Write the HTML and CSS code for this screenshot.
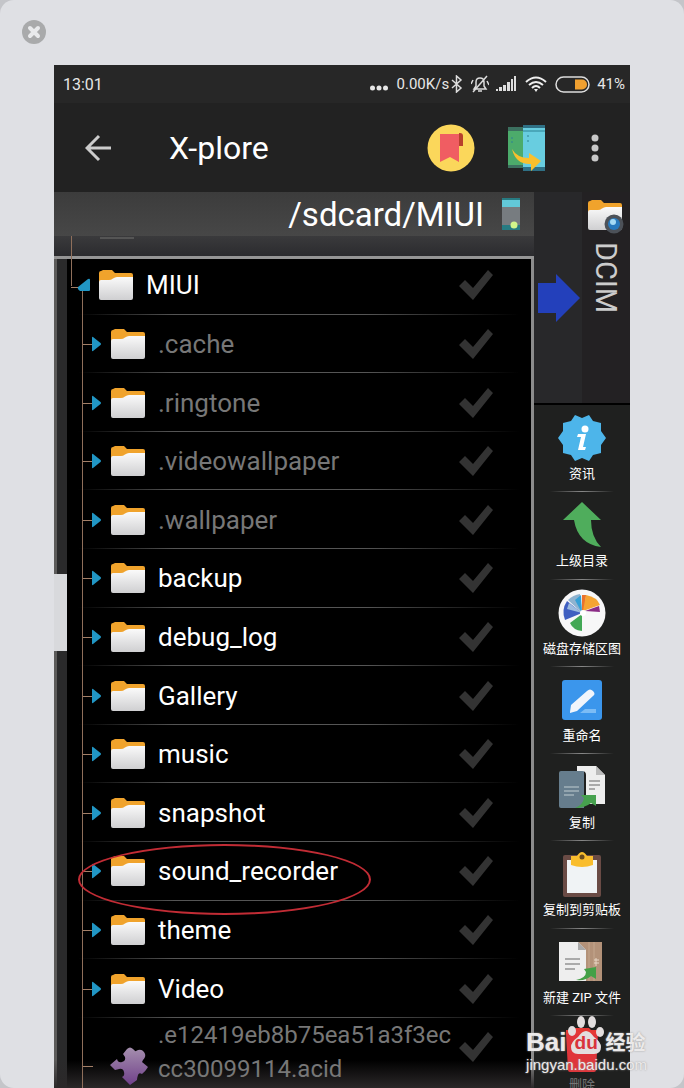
FILE: index.html
```html
<!DOCTYPE html>
<html lang="zh-CN">
<head>
<meta charset="UTF-8" />
<meta name="viewport" content="width=device-width, initial-scale=1" />
<title>X-plore</title>
<link rel="stylesheet" href="styles.css">
</head>
<body>
<svg class="defs" aria-hidden="true">
  <defs>
    <linearGradient id="paper" x1="0" y1="0" x2="0" y2="1">
      <stop offset="0" stop-color="#fafafa" />
      <stop offset="1" stop-color="#cfcfd1" />
    </linearGradient>
    <linearGradient id="plum" x1="0" y1="0" x2="0" y2="1">
      <stop offset="0" stop-color="#a58fae" />
      <stop offset="1" stop-color="#70408a" />
    </linearGradient>
    <symbol id="folder" viewBox="0 0 36 30">
      <path d="M1 12V3q0-2 2-2l2-1h9l3 3h16q2 0 2 2v7z" fill="#f0a32c" />
      <path d="M1 12q0-2 2-2h8q2 0 4-1.500t4-1.500h16v21q0 2-2 2H3q-2 0-2-2z" fill="url(#paper)" />
    </symbol>
    <symbol id="check" viewBox="0 0 36 32">
      <path d="M1 17l6-6 8 8L30 1l5 5-20 25z" fill="#333" />
    </symbol>
    <symbol id="branch" viewBox="0 0 18 16">
      <path d="M0 8.500h9" stroke="#a58068" />
      <path d="M9 1.500q0-1 1-.5l7.500 6q1 1 0 2l-7.500 6q-1 .5-1-.5z" fill="#2196c4" />
    </symbol>
  </defs>
</svg>

<div class="window">
  <button class="close" aria-label="关闭">
    <svg width="24" height="24" viewBox="0 0 24 24"><circle cx="12" cy="12" r="12" fill="#a9aaab" /><path d="M8 8l8 8M16 8l-8 8" stroke="#e9eaec" stroke-width="4" stroke-linecap="round" /></svg>
  </button>

  <main class="phone">
    <header>
      <div class="status">
        <span class="time">13:01</span>
        <svg class="dots" width="18" height="20" viewBox="0 0 18 20" fill="#e6e6e6"><circle cx="2.500" cy="14" r="2.500" /><circle cx="9" cy="14" r="2.500" /><circle cx="15.500" cy="14" r="2.500" /></svg>
        <span class="speed">0.00K/s</span>
        <svg width="12" height="18" viewBox="0 0 12 18" fill="none" stroke="#ddd" stroke-width="1.500"><path d="M1 5l9 8-4.500 4V1L10 5l-9 8" /></svg>
        <svg class="bell" width="18" height="18" viewBox="0 0 18 18" fill="none" stroke="#ddd" stroke-width="1.500"><path d="M3 14h12l-2-3V7q0-4-4-4T5 7v4zM7 16h4M16 1L2 17M2 5L0 9M16 6l2 4" /></svg>
        <svg class="signal" width="22" height="16" viewBox="0 0 22 16" fill="#ddd"><path d="M1 13h2v2H1zM4 11h3v4H4zM8 9h3v6H8zM12 6h3v9h-3zM16 3h2v12h-2zM19 0h2v15h-2z" /></svg>
        <svg class="wifi" width="22" height="16" viewBox="0 0 22 16" fill="none" stroke="#eee" stroke-width="2"><path d="M1 6q10-9 20 0M4 9q7-6 14 0M7 12q4-4 8 0" /><path d="M9 13h4l-2 3z" fill="#eee" stroke="none" /></svg>
        <svg class="battery" width="36" height="17" viewBox="0 0 36 17"><rect x="1" y="1" width="33" height="15" rx="7.500" fill="none" stroke="#ddd" stroke-width="1.500" /><path d="M20 3.500h7a5 5 0 010 10h-7z" fill="#f0a030" /></svg>
        <span class="charge">41%</span>
      </div>

      <div class="toolbar">
        <button class="back" aria-label="返回">
          <svg width="28" height="28" viewBox="0 0 28 28" fill="none" stroke="#ccc" stroke-width="3"><path d="M26 14H3M14 2L2 14l12 12" /></svg>
        </button>
        <h1>X-plore</h1>
        <button aria-label="书签">
          <svg width="48" height="48" viewBox="0 0 48 48"><circle cx="24" cy="24" r="23.500" fill="#fbd75b" /><path d="M13 10h19v28l-9-5-10 5z" fill="#f05d62" /><path d="M32 9h1q3 0 3 3v10h-4z" fill="#b8402c" /></svg>
        </button>
        <button class="swap" aria-label="切换窗格">
          <svg width="40" height="48" viewBox="0 0 40 48"><path d="M1 5h16v39H1z" fill="#4cab6b" /><path d="M1 3h16v4H1zM1 41h16v3H1z" fill="#3c705f" /><path d="M16 3h22v43H16z" fill="#68cde0" /><path d="M16 1h22v3H16zM16 43h22v4H16z" fill="#2f7085" /><path d="M16 7h22M4 14h2M4 18h2M20 12h2M20 17h2" stroke="#2c8294" /><path d="M5 25q5 9 17 9v-5l12 8-10 10v-7Q9 41 5 25z" fill="#f9c02d" /></svg>
        </button>
        <button class="more" aria-label="更多">
          <svg width="8" height="28" viewBox="0 0 8 28" fill="#c8c8c8"><circle cx="4" cy="4" r="3.500" /><circle cx="4" cy="14" r="3.500" /><circle cx="4" cy="24" r="3.500" /></svg>
        </button>
      </div>
    </header>

    <div class="panes">
      <section class="files">
        <div class="path">
          <h2>/sdcard/MIUI</h2>
          <svg width="18" height="32" viewBox="0 0 18 32"><path d="M0 1h18v31H0z" fill="#777c80" /><path d="M0 1h18v8H0z" fill="#62c8d8" /><path d="M0 0h18v2H0zM0 27h18v5H0z" fill="#277b82" /><circle cx="12" cy="27" r="3.500" fill="#d2f58a" /></svg>
        </div>
        <div class="peek"></div>
        <ul class="list">
          <li class="root">
            <svg class="open" width="22" height="16" viewBox="0 0 22 16"><path d="M0 10.500h9" stroke="#a58068" /><path d="M7 10L17 2q2-1 2 1v10q0 1-1 1H9q-3-2-2-4z" fill="#2196c4" /></svg>
            <svg class="folder"><use href="#folder" /></svg><span>MIUI</span><svg class="check"><use href="#check" /></svg>
          </li>
          <li class="hidden"><svg class="branch"><use href="#branch" /></svg><svg class="folder"><use href="#folder" /></svg><span>.cache</span><svg class="check"><use href="#check" /></svg></li>
          <li class="hidden"><svg class="branch"><use href="#branch" /></svg><svg class="folder"><use href="#folder" /></svg><span>.ringtone</span><svg class="check"><use href="#check" /></svg></li>
          <li class="hidden"><svg class="branch"><use href="#branch" /></svg><svg class="folder"><use href="#folder" /></svg><span>.videowallpaper</span><svg class="check"><use href="#check" /></svg></li>
          <li class="hidden"><svg class="branch"><use href="#branch" /></svg><svg class="folder"><use href="#folder" /></svg><span>.wallpaper</span><svg class="check"><use href="#check" /></svg></li>
          <li><svg class="branch"><use href="#branch" /></svg><svg class="folder"><use href="#folder" /></svg><span>backup</span><svg class="check"><use href="#check" /></svg></li>
          <li><svg class="branch"><use href="#branch" /></svg><svg class="folder"><use href="#folder" /></svg><span>debug_log</span><svg class="check"><use href="#check" /></svg></li>
          <li><svg class="branch"><use href="#branch" /></svg><svg class="folder"><use href="#folder" /></svg><span>Gallery</span><svg class="check"><use href="#check" /></svg></li>
          <li><svg class="branch"><use href="#branch" /></svg><svg class="folder"><use href="#folder" /></svg><span>music</span><svg class="check"><use href="#check" /></svg></li>
          <li><svg class="branch"><use href="#branch" /></svg><svg class="folder"><use href="#folder" /></svg><span>snapshot</span><svg class="check"><use href="#check" /></svg></li>
          <li class="marked"><svg class="branch"><use href="#branch" /></svg><svg class="folder"><use href="#folder" /></svg><span>sound_recorder</span><svg class="check"><use href="#check" /></svg></li>
          <li><svg class="branch"><use href="#branch" /></svg><svg class="folder"><use href="#folder" /></svg><span>theme</span><svg class="check"><use href="#check" /></svg></li>
          <li><svg class="branch"><use href="#branch" /></svg><svg class="folder"><use href="#folder" /></svg><span>Video</span><svg class="check"><use href="#check" /></svg></li>
          <li class="hidden last">
            <svg class="leaf" width="16" height="40" viewBox="0 0 16 40"><path d="M0 20.500h10" stroke="#a58068" /></svg>
            <svg class="puzzle" width="40" height="40" viewBox="0 0 40 40"><path d="M1 19l7-6q1 4 5 3t3-5l-2-3 4-5q3-3 6 0t3 2q5-3 8 1t-1 8l-1 2 6 5q-3 5-6 7-3-2-4 1t-1 5l-7 5-8-8q3-1 2-5t-5-3-4 1z" fill="url(#plum)" /></svg>
            <span>.e12419eb8b75ea51a3f3ec<wbr>cc30099114.acid</span>
            <svg class="check"><use href="#check" /></svg>
          </li>
        </ul>
      </section>

      <aside>
        <div class="other">
          <div class="direction">
            <svg width="42" height="50" viewBox="0 0 42 50"><path d="M0 10h18V1l24 24-24 24v-9H0z" fill="#2340bb" /></svg>
          </div>
          <div class="target">
            <svg width="38" height="34" viewBox="0 0 38 34"><use href="#folder" width="36" height="30" /><circle cx="27" cy="24" r="9.500" fill="#4c5158" /><circle cx="27" cy="24" r="6" fill="#2879bd" /><circle cx="26" cy="22" r="3" fill="#a5daf5" /></svg>
            <span>DCIM</span>
          </div>
        </div>
        <nav aria-label="操作">
          <button>
            <svg viewBox="0 0 48 48"><path d="M17 1l7 3 7-3 4 6 8 2v8l5 7-5 7v8l-8 2-4 6-7-3-7 3-4-6-8-2v-8l-5-7 5-7V9l8-2z" fill="#4db5ea" /><circle cx="27" cy="15" r="3.500" fill="#fff" /><path d="M20 20h8l-3 13h3l-1 3h-7l3-13h-4z" fill="#fff" /></svg>
            资讯
          </button>
          <button>
            <svg viewBox="0 0 48 48"><path d="M24 1l19 18h-10q0 17 10 27-23-3-27-27H5z" fill="#4fad5c" /></svg>
            上级目录
          </button>
          <button>
            <svg viewBox="0 0 48 48"><circle cx="24" cy="24" r="23.500" fill="#f7f7f8" /><path d="M24 24L10 11q5-5 12-6z" fill="#8fb3d0" /><path d="M24 24L7 31q-4-10 2-19z" fill="#3f5fc1" /><path d="M24 24L9 20l2-6z" fill="#9dbce0" /><path d="M24 24l-7-13 6-5z" fill="#35a0d6" /><path d="M24 24V6h4l-1 13z" fill="#e9722e" /><path d="M25 22l3-16q11 2 14 10z" fill="#f5a432" /><path d="M27 22l14-5 1 6z" fill="#8b2b86" /><path d="M24 25v17q-9-1-12-8z" fill="#43a856" /><circle cx="25" cy="24" r="3" fill="#fff" /></svg>
            磁盘存储区图
          </button>
          <button>
            <svg viewBox="0 0 48 48"><rect x="4" y="4" width="40" height="40" rx="3" fill="#3b96ec" /><path d="M12 36l1-7 16-14q3-3 6 0t0 5L19 35l-7 2z" fill="#f1f5fb" /><path d="M27 33h11v4H22z" fill="#7cbcf5" /></svg>
            重命名
          </button>
          <button>
            <svg viewBox="0 0 48 48"><path d="M3 8h23v37H3q-2 0-2-2V10q0-2 2-2z" fill="#667d8d" /><path d="M19 3h19l9 9v29H28V12q0-4-4-4h-5z" fill="#eee" /><path d="M6 24h15M6 28h15M6 32h10" stroke="#93a5af" stroke-width="2" /><path d="M38 3v9h9z" fill="#bbb" /><path d="M31 18h11M31 22h11M31 26h6" stroke="#aaa" stroke-width="2" /><path d="M17 45q8-3 9-10l-3-3h15v11l-5-3q-6 5-16 5z" fill="#46a14e" /></svg>
            复制
          </button>
          <button>
            <svg viewBox="0 0 48 48"><rect x="5" y="5" width="38" height="42" rx="2" fill="#6a4b45" /><path d="M9 10h30v33H9z" fill="#f0f3f5" /><path d="M13 6h6q5-8 10 0h6v9q-11 4-22 0z" fill="#f9bd2d" /><circle cx="24" cy="7" r="2.500" fill="#6a4b1e" /></svg>
            复制到剪贴板
          </button>
          <button>
            <svg viewBox="0 0 48 48"><path d="M18 4h26v39H18z" fill="#b39279" /><path d="M31 4v39M36 4v39" stroke="#c4a78f" /><path d="M1 4h19l8 8v31H1z" fill="#eee" /><path d="M20 4v8h8z" fill="#aaa" /><path d="M7 21h15M7 26h15M7 31h10" stroke="#aaa" stroke-width="2" /><path d="M36 22h5M36 25h5M38 20v8" stroke="#e9d8c8" /><path d="M18 42q10-2 10-8l-2-3 12-2v12l-5-3q-5 5-15 4z" fill="#43a047" /></svg>
            新建 ZIP 文件
          </button>
          <button class="last">
            <svg viewBox="0 0 48 48"><path d="M17 3h14l2 2h7v5H8V5h7z" fill="#e53935" /><path d="M8 9h32l-2 36q0 2-2 2H12q-2 0-2-2z" fill="#e0353a" /></svg>
            删除
          </button>
        </nav>
      </aside>
    </div>
    <div class="handle"></div>
  </main>

  <div class="watermark">
    <div class="brand">
      <span>Bai</span>
      <span class="paw"><svg width="38" height="40" viewBox="0 0 38 40" fill="#e3dede"><ellipse cx="5" cy="15" rx="4" ry="5" /><ellipse cx="14" cy="6" rx="4" ry="6" /><ellipse cx="25" cy="6" rx="4" ry="6" /><ellipse cx="33" cy="16" rx="4" ry="5" /><path d="M19 15q4 0 8 6 7 5 7 10 0 7-7 7H11q-7 0-7-7 0-5 7-10 4-6 8-6z" /></svg><b>du</b></span>
      <span class="cn">经验</span>
    </div>
    <div class="site">jingyan.baidu.com</div>
  </div>
</div>
</body>
</html>
```
FILE: styles.css
```css
*,
*::before,
*::after {
  box-sizing: border-box;
}

body {
  margin: 0;
  font-family: Roboto, "Noto Sans CJK SC", sans-serif;
  color: #fff;
  background: #c4c5c9;
}

svg {
  display: block;
  flex: none;
}

.defs {
  position: absolute;
  width: 0;
  height: 0;
}

button {
  padding: 0;
  border: 0;
  background: none;
  color: inherit;
  font: inherit;
  cursor: pointer;
}

h1,
h2 {
  margin: 0;
  font-weight: 400;
}

/* Outer window */
.window {
  position: relative;
  display: flex;
  flex-direction: column;
  height: 100vh;
  padding: 20px 54px 0;
  overflow: hidden;
  border-radius: 14px;
  background: #dfe0e4;
}

.close {
  align-self: flex-start;
  height: 24px;
  margin: 0 0 21px -32px;
}

.phone {
  position: relative;
  display: flex;
  flex: 1;
  flex-direction: column;
  min-height: 0;
  background: #222;
}

.status {
  display: flex;
  align-items: center;
  height: 38px;
  padding: 0 5px 0 9px;
  background: #272727;
  color: #e6e6e6;
  font-size: 16px;
}

.time {
  margin-right: auto;
}

.speed,
.charge {
  font-size: 15px;
}

.speed {
  margin-right: 2px;
}

.dots {
  margin-right: 9px;
}

.bell {
  margin: 0 6px 0 8px;
}

.wifi {
  margin: 0 8px;
}

.battery {
  margin-right: 6px;
}

.toolbar {
  display: flex;
  align-items: center;
  height: 89px;
  padding: 0 31px;
}

.toolbar h1 {
  flex: 1;
  margin-left: 56px;
  font-size: 32px;
}

.swap {
  margin: 0 44px 0 32px;
}

/* Two panes */
.panes {
  display: flex;
  flex: 1;
  min-height: 0;
}

.files {
  display: flex;
  flex: 1;
  flex-direction: column;
}

.path {
  display: flex;
  align-items: center;
  justify-content: flex-end;
  gap: 18px;
  height: 44px;
  padding-right: 14px;
  background: linear-gradient(#3c3c3c, #474747);
}

.path h2 {
  font-size: 33px;
}

.peek {
  height: 20px;
  background:
    linear-gradient(#8f6f5b, #8f6f5b) 17px 0 / 1px 100% no-repeat,
    linear-gradient(#555, #555) 46px 1px / 34px 2px no-repeat,
    linear-gradient(#3a3a3c, #2b2b2e);
}

.list {
  display: flex;
  flex: 1;
  flex-direction: column;
  margin: 0;
  padding: 0;
  list-style: none;
  background: linear-gradient(90deg, #2a2a2b 13px, #000 13px);
  box-shadow: inset 0 3px #959595, inset -3px 0 #8c8c8c, inset 3px 0 #5c5b5a;
  font-size: 26px;
}

.list li {
  position: relative;
  display: flex;
  flex: 1;
  align-items: center;
  padding: 0 40px 0 29px;
  background:
    linear-gradient(#8f6f5b, #8f6f5b) 28px 0 / 1px 100% no-repeat,
    linear-gradient(90deg, transparent 5%, #555 25%, #555 65%, transparent 97%) 0 100% / 100% 1px no-repeat;
}

.list .root {
  padding-left: 17px;
  background:
    linear-gradient(#8f6f5b, #8f6f5b) 17px 0 / 1px 30px no-repeat,
    linear-gradient(#8f6f5b, #8f6f5b) 28px 100% / 1px 28px no-repeat,
    linear-gradient(90deg, transparent 5%, #555 25%, #555 65%, transparent 97%) 0 100% / 100% 1px no-repeat;
}

.open {
  margin-right: 5px;
}

.branch {
  width: 18px;
  height: 16px;
  margin-right: 9px;
}

.folder {
  width: 36px;
  height: 30px;
  margin-right: 12px;
}

.list span {
  flex: 1;
}

.hidden span {
  color: #777;
}

.check {
  width: 36px;
  height: 32px;
}

.list .last {
  flex: 0 0 70px;
  align-items: flex-start;
  line-height: 34px;
  background:
    linear-gradient(#8f6f5b, #8f6f5b) 28px 0 / 1px 100% no-repeat,
    linear-gradient(transparent 60%, #2b2829);
}

.last .leaf {
  margin: 28px 10px 0 0;
}

.last .puzzle {
  margin: 28px 9px 0 0;
}

.last .check {
  margin-top: 13px;
}

.last span {
  font-size: 24px;
}

/* Red pen ring around a row */
.marked::after {
  content: "";
  position: absolute;
  top: 2px;
  left: 24px;
  width: 293px;
  height: 71px;
  border: 2px solid #c22c35;
  border-radius: 50%;
}

/* Right column */
aside {
  display: flex;
  flex: 0 0 96px;
  flex-direction: column;
  background: #1f201f;
}

.other {
  display: flex;
  height: 213px;
  border-bottom: 2px solid #000;
  background: #28282a;
}

.direction {
  flex: 1;
  padding: 81px 0 0 4px;
}

.target {
  display: flex;
  flex-direction: column;
  align-items: center;
  gap: 8px;
  width: 48px;
  padding-top: 8px;
  background: #232123;
}

.target span {
  color: #ccc;
  font-size: 29px;
  line-height: 32px;
  writing-mode: vertical-rl;
}

nav {
  display: flex;
  flex: 1;
  flex-direction: column;
  min-height: 0;
}

nav button {
  display: flex;
  flex: 1;
  flex-direction: column;
  align-items: center;
  justify-content: flex-start;
  gap: 2px;
  min-height: 0;
  padding-top: 9px;
  background: linear-gradient(90deg, transparent, #888, transparent) 50% 100% / 64px 1px no-repeat;
  font-size: 13px;
  line-height: 20px;
  white-space: nowrap;
}

nav svg {
  width: 48px;
  height: 48px;
}

nav .last {
  flex: 0 0 72px;
  background: none;
  color: #777;
}

.handle {
  position: absolute;
  top: 509px;
  left: 0;
  width: 13px;
  height: 77px;
  background: #d8d9dc;
}

/* Site mark over the corner */
.watermark {
  position: absolute;
  right: 37px;
  bottom: 14px;
  color: #eceaea;
  text-shadow: 0 0 2px #999;
}

.brand {
  display: flex;
  align-items: flex-end;
  font: bold 26px/28px "Liberation Sans", sans-serif;
}

.paw {
  position: relative;
}

.paw b {
  position: absolute;
  top: 17px;
  left: 8px;
  color: #d9343a;
  font-size: 19px;
  line-height: 20px;
  text-shadow: none;
}

.brand .cn {
  margin-left: 1px;
  font: bold 20px/28px "Noto Sans CJK SC", sans-serif;
}

.site {
  font: 15px/18px "Liberation Sans", sans-serif;
}
```
